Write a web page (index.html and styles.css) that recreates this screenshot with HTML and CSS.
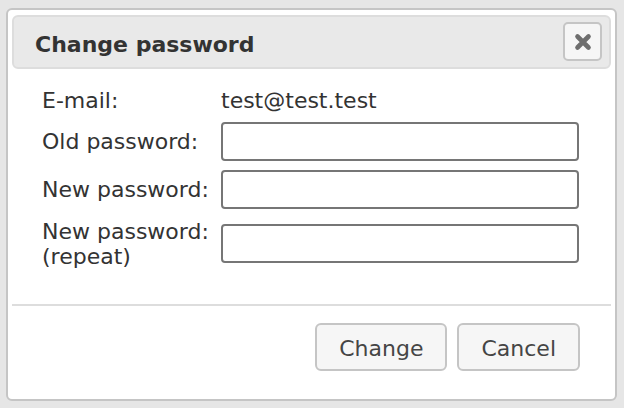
FILE: index.html
```html
<!DOCTYPE html>
<html>
<head>
<meta charset="utf-8">
<link rel="stylesheet" href="styles.css">
</head>
<body>
<div class="dialog">
  <div class="titlebar">
    <span class="title">Change password</span>
    <button class="close" type="button" aria-label="Close">
      <svg width="18" height="18" viewBox="0 0 18 18"><path d="M3.5 3.5 L14.5 14.5 M14.5 3.5 L3.5 14.5" stroke="#6e6e6e" stroke-width="4.6" stroke-linecap="round" fill="none"/></svg>
    </button>
  </div>
  <div class="content">
    <div class="form">
      <div class="label email-row">E-mail:</div>
      <div class="value email-row">test@test.test</div>
      <div class="label">Old password:</div>
      <input class="field" type="password">
      <div class="label">New password:</div>
      <input class="field" type="password">
      <div class="label">New password: (repeat)</div>
      <input class="field" type="password">
    </div>
  </div>
  <div class="buttonpane">
    <button class="btn" type="button">Change</button>
    <button class="btn" type="button">Cancel</button>
  </div>
</div>
</body>
</html>
```
FILE: styles.css
```css
* { box-sizing: border-box; }
html, body { margin: 0; padding: 0; }
body {
  background: #e6e6e6;
  font-family: "DejaVu Sans", Verdana, sans-serif;
  font-size: 22px;
  color: #333333;
  width: 624px;
  height: 408px;
  overflow: hidden;
}
.dialog {
  margin: 8px 0 0 6px;
  width: 611px;
  height: 393px;
  background: #ffffff;
  border: 2px solid #c5c5c5;
  border-radius: 6px;
  padding: 5px 4px 4px 4px;
  display: flex;
  flex-direction: column;
}
.titlebar {
  height: 54px;
  flex: none;
  background: #e9e9e9;
  border: 2px solid #dddddd;
  border-radius: 6px;
  display: flex;
  align-items: center;
  justify-content: space-between;
  padding: 0 7px 0 21px;
}
.title {
  font-weight: bold;
  color: #333333;
  margin-top: 4px;
}
.close {
  width: 39px;
  height: 39px;
  margin-top: -1px;
  border: 2px solid #c5c5c5;
  border-radius: 5px;
  background: #f6f6f6;
  padding: 0;
  display: flex;
  align-items: center;
  justify-content: center;
}
.close svg { display: block; filter: blur(0.4px); }
.content {
  flex: 1;
  padding: 21px 0 0 30px;
}
.form {
  display: grid;
  grid-template-columns: 179px 358px;
  grid-template-rows: 22px auto auto auto;
  row-gap: 9.5px;
  align-items: center;
}
.email-row { line-height: 22px; }
.label, .value { color: #333333; }
.field {
  height: 39px;
  width: 358px;
  border: 2px solid #767676;
  border-radius: 4px;
  background: #ffffff;
  margin: 0;
  padding: 2px 6px;
  font: inherit;
}
.buttonpane {
  flex: none;
  border-top: 2px solid #dddddd;
  padding: 17px 31px 24px 0;
  display: flex;
  justify-content: flex-end;
  gap: 10px;
}
.btn {
  height: 48px;
  padding: 3px 22px 0;
  border: 2px solid #c5c5c5;
  border-radius: 6px;
  background: #f6f6f6;
  color: #454545;
  font-family: "DejaVu Sans", Verdana, sans-serif;
  font-size: 22px;
}
```
